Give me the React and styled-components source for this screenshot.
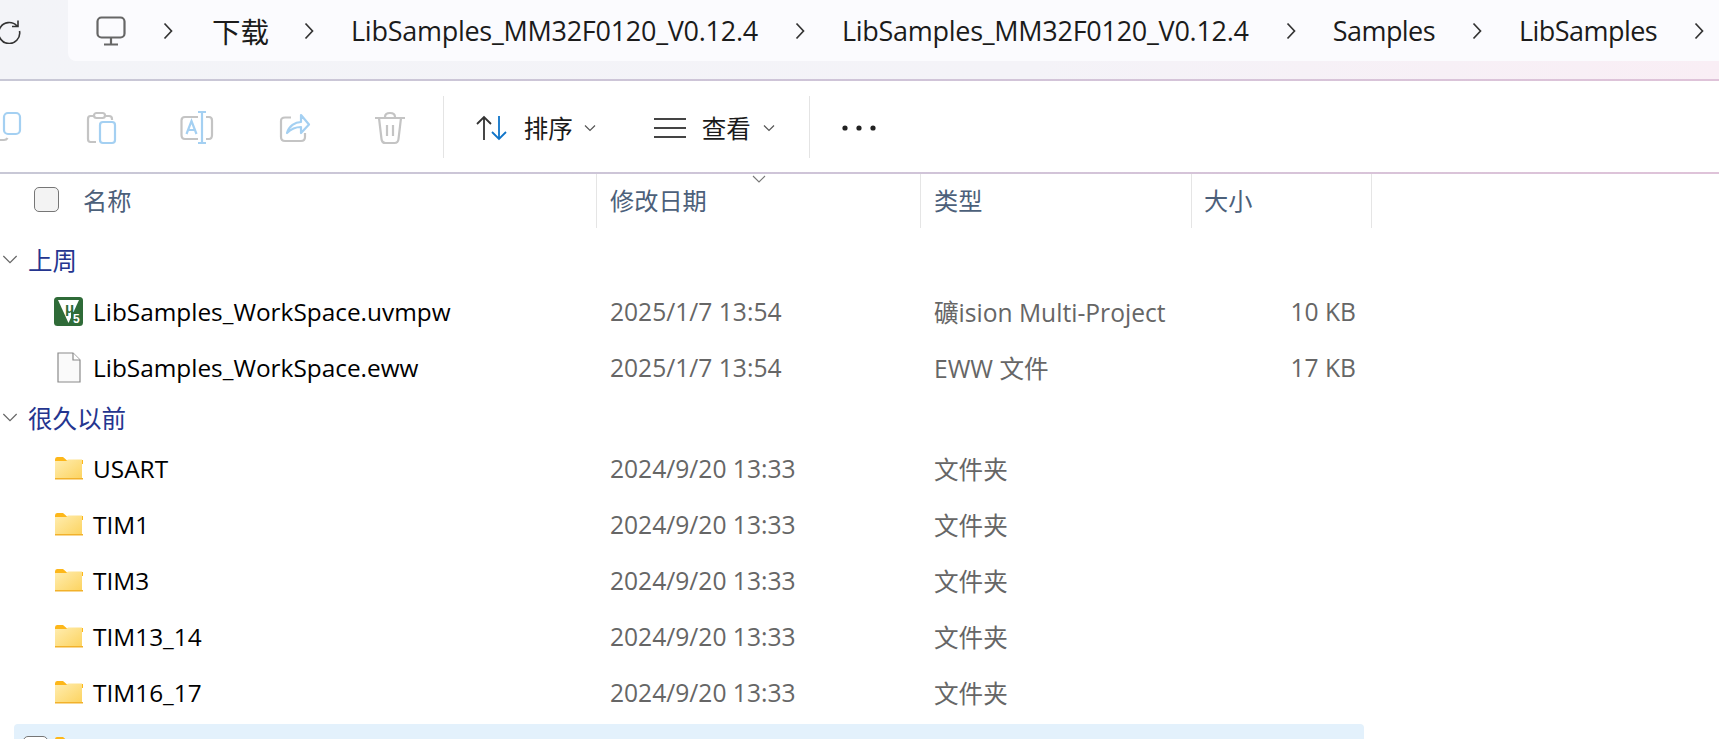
import React from "react";
import styled, { createGlobalStyle } from "styled-components";

const Global = createGlobalStyle`
  html, body { margin: 0; padding: 0; background: #fff; overflow: hidden; }
  body { font-family: "Open Sans", "Noto Sans CJK SC", sans-serif; }
  * { box-sizing: border-box; }
`;
const Page = styled.div`
  width: 1719px; height: 739px; overflow: hidden; background: #fff; position: relative;
`;
const TopBand = styled.div`
  height: 79px; display: flex; align-items: flex-start; padding-left: 68px;
  background: linear-gradient(90deg, #f3f4f8 0%, #f4f3f8 60%, #f9eef5 100%);
`;
const Crumbs = styled.nav`
  flex: 1; height: 61px; display: flex; align-items: center; gap: 37px; padding-left: 28px;
  border-radius: 0 0 0 8px; background: #fbfbfe; white-space: nowrap; color: #1b1b1b;
`;
const Crumb = styled.span`
  font-size: ${p => p.$cjk ? "28.500px" : "27px"};
  letter-spacing: ${p => p.$cjk ? "0" : p.$short ? "-0.55px" : "-0.27px"};
  margin: 0 ${p => p.$cjk ? -2 : 0}px 0 ${p => p.$cjk ? 2 : 0}px;
`;
const Refresh = styled.svg`
  position: absolute; left: -4px; top: 18px;
`;
const Rule = styled.div`
  height: 2px; background: linear-gradient(90deg, #c8c8d6 0%, #cfc4d8 50%, #dfc3d9 100%);
`;
const Toolbar = styled.div`
  height: 91px; padding-top: 3px; display: flex; align-items: center; margin-left: -44.700px;
`;
const ToolBtn = styled.div`
  width: 96.700px; flex: none; display: flex; justify-content: center; align-items: center;
`;
const Sep = styled.div`
  width: 1px; height: 62px; background: #e4e4e4; flex: none; margin: -2px 0 0 ${p => p.$ml || 0}px;
`;
const Menu = styled.div`
  display: flex; align-items: center; flex: none; width: ${p => p.$w}px;
  padding-left: ${p => p.$pl}px; color: #1b1b1b; font-size: 24.500px;
`;
const MenuLabel = styled.span`
  margin: 0 ${p => p.$mr}px 0 ${p => p.$ml}px; line-height: 1; font-family: "Noto Sans CJK SC", sans-serif;
`;
const Header = styled.div`
  height: 55px; display: grid; grid-template-columns: 597px 324px 271px 180px; position: relative;
`;
const HeadCell = styled.div`
  display: flex; align-items: center; height: 54px; padding: 0 0 4px ${p => p.$pl || 13}px;
  border-right: 1px solid #e5e5e5; color: #4c607a; font-size: 24.200px;
  font-family: "Noto Sans CJK SC", sans-serif;
`;
const Box = styled.span`
  width: 25px; height: 25px; border-radius: 5px; flex: none;
  border: 1.500px solid #767676; background: ${p => p.$white ? "#fff" : "#f3f3f3"};
`;
const HeadLabel = styled.span`
  margin-left: 24px;
`;
const SortMark = styled.svg`
  position: absolute; left: 752px; top: 1px;
`;
const List = styled.div`
  display: flex; flex-direction: column; width: 1364px; padding-left: 14px;
`;
const Group = styled.div`
  height: ${p => p.$h}px; margin-left: -14px; padding: ${p => p.$pt || 0}px 0 0 2px; display: flex; align-items: center;
  color: #24358f; font-size: 24.500px; font-family: "Noto Sans CJK SC", sans-serif;
`;
const GroupLabel = styled.span`
  margin-left: 10px;
`;
const Row = styled.div`
  display: grid; grid-template-columns: 583px 324px 271px 172px; align-items: center;
  height: 56px; flex: none;
`;
const SelectedRow = styled(Row)`
  height: 52px; margin-top: 4px; background: #e3f1fc; border-radius: 4px; position: relative;
  & svg { margin-top: -4px; }
`;
const NameCell = styled.div`
  display: flex; align-items: center; padding-left: 40px; color: #000; font-size: 24.400px;
`;
const IconSlot = styled.span`
  width: 29px; height: 30px; flex: none; display: flex; align-items: center; justify-content: center; margin-right: 10px;
`;
const Cell = styled.div`
  padding-left: ${p => p.$pl}px; padding-right: ${p => p.$pr || 0}px; color: #666; font-size: 24.600px;
  text-align: ${p => p.$right ? "right" : "left"}; white-space: nowrap;
`;
const RowCheck = styled(Box)`
  position: absolute; left: 9px; top: 12px; width: 25px; height: 25px; background: #fff;
`;

const Chevron = () => (
  <svg width="10" height="20" viewBox="0 0 10 20" fill="none" stroke="#333" strokeWidth="1.7"><path d="M1.500 2.500 8.500 10 1.500 17.500" /></svg>
);
const Down = ({ c = "#555", w = 12 }) => (
  <svg width={w} height={(w * 2) / 3} viewBox="0 0 12 8" fill="none" stroke={c} strokeWidth={12 / w * 1.2}><path d="M1 1.500 6 6.500 11 1.500" /></svg>
);
const BLUE = "#a4d0f2";
const GR = "#c4c4c4";
const CopyIcon = () => (
  <svg width="36" height="36" viewBox="0 0 36 36" fill="none" strokeWidth="2.200" overflow="visible">
    <rect x="18" y="3" width="16" height="21" rx="4" stroke={BLUE} />
    <path d="M9 30h9c2 0 3-1 3.500-2" stroke={GR} />
  </svg>
);
const PasteIcon = () => (
  <svg width="36" height="36" viewBox="0 0 36 36" fill="none" strokeWidth="2.200">
    <path d="M14 32H8.500Q6 32 6 29V9Q6 6 8.500 6H12M24 6h3q3 0 3 3v1" stroke={GR} />
    <rect x="12" y="3" width="11" height="5" rx="2.500" stroke={GR} />
    <rect x="18" y="12" width="15" height="21" rx="3" stroke={BLUE} />
  </svg>
);
const RenameIcon = () => (
  <svg width="36" height="36" viewBox="0 0 36 36" fill="none" strokeWidth="2.200">
    <path d="M19 7H6Q2.500 7 2.500 10.500V25Q2.500 29 6 29H19M27 7h3q3 0 3 3.500V25q0 4-3 4h-3" stroke={GR} />
    <path d="M23 2v31M19 2h8M19 33h8M7.500 24 12.500 11 17.500 24M9.500 20h6" stroke={BLUE} />
  </svg>
);
const ShareIcon = () => (
  <svg width="36" height="36" viewBox="0 0 36 36" fill="none" strokeWidth="2.200">
    <path d="M15 7.500H9Q5 7.500 5 11V27q0 4 4 4h16q4 0 4-4V23" stroke={GR} />
    <path d="M11 23c2-7 8-11 14-11V5L33 14.500 25 23V17c-5 0-10 2-14 6Z" stroke={BLUE} strokeLinejoin="round" />
  </svg>
);
const TrashIcon = () => (
  <svg width="36" height="36" viewBox="0 0 36 36" fill="none" stroke={GR} strokeWidth="2.200">
    <path d="M3 8h30M7 8l2.500 21q.4 4 4 4h9q3.600 0 4-4L29 8M13 7q0-4 5-4t5 4M15 15v11M21 15v11" />
  </svg>
);
const Folder = () => (
  <svg width="29" height="24" viewBox="0 0 29 24">
    <defs>
      <linearGradient id="fb" x1="0" y1="0" x2="1" y2="1">
        <stop offset="0" stopColor="#ffedb0" />
        <stop offset="1" stopColor="#fcd35f" />
      </linearGradient>
    </defs>
    <path d="M1 3.500Q1 1 3 1h6l3.500 3H29v4H1Z" fill="#fdb71a" />
    <path d="M1 5h11l2-1.500H28v19.500H1Z" fill="url(#fb)" />
    <rect x="1" y="22" width="28" height="1.500" fill="#f2b12b" />
  </svg>
);
const FileIcon = () => (
  <svg width="24" height="31" viewBox="0 0 24 31" fill="#fafafa" stroke="#8a8a8a" strokeWidth="1.200">
    <path d="M1 1H16L23 8V30H1Z" />
    <path d="M16 1V8H23" fill="#fff" />
  </svg>
);
const KeilIcon = () => (
  <svg width="29" height="29" viewBox="0 0 29 29">
    <rect width="29" height="29" rx="3.500" fill="#2f6b38" />
    <path d="M4 3H25L14.500 26Z" fill="#fff" />
    <text x="11" y="16" fontSize="15" fontWeight="700" fill="#2f6b38" fontFamily="Liberation Sans, sans-serif">μ</text>
    <rect x="17" y="15" width="11" height="13" fill="#2f6b38" />
    <text x="19" y="26" fontSize="12" fontWeight="700" fill="#fff" fontFamily="Liberation Sans, sans-serif">5</text>
  </svg>
);

const crumbs = ["LibSamples_MM32F0120_V0.12.4", "LibSamples_MM32F0120_V0.12.4", "Samples", "LibSamples"];
const folders = ["USART", "TIM1", "TIM3", "TIM13_14", "TIM16_17"];

const FileRow = ({ icon, name, date, type, size }) => (
  <Row>
    <NameCell><IconSlot>{icon}</IconSlot>{name}</NameCell>
    <Cell $pl={13}>{date}</Cell>
    <Cell $pl={13}>{type}</Cell>
    <Cell $pl={0} $pr={8} $right>{size}</Cell>
  </Row>
);

export default function App() {
  return (
    <Page>
      <Global />
      <TopBand>
        <Refresh width="26" height="26" viewBox="0 0 26 26" fill="none" stroke="#333" strokeWidth="1.600">
          <path d="M21 8A10.500 10.500 0 1 0 23.500 13M22 2.500V8.500H16" />
        </Refresh>
        <Crumbs>
          <svg width="30" height="30" viewBox="0 0 30 30" fill="none" stroke="#666" strokeWidth="2.200">
            <rect x="1.500" y="1.500" width="27" height="20" rx="4" />
            <path d="M15 22v6M8 28.500h14" />
          </svg>
          <Chevron />
          <Crumb $cjk>下载</Crumb>
          {crumbs.map((c, i) => (
            <React.Fragment key={i}>
              <Chevron />
              <Crumb $short={i > 1}>{c}</Crumb>
            </React.Fragment>
          ))}
          <Chevron />
        </Crumbs>
      </TopBand>
      <Rule />
      <Toolbar>
        <ToolBtn><CopyIcon /></ToolBtn>
        <ToolBtn><PasteIcon /></ToolBtn>
        <ToolBtn><RenameIcon /></ToolBtn>
        <ToolBtn><ShareIcon /></ToolBtn>
        <ToolBtn><TrashIcon /></ToolBtn>
        <Sep $ml={4} />
        <Menu $w={210} $pl={32}>
          <svg width="32" height="26" viewBox="0 0 32 26" fill="none" strokeWidth="1.800">
            <path d="M8 25V2M1 9l7-7 7 7" stroke="#333" />
            <path d="M23 1v23M16 17l7 7 7-7" stroke="#0f74c8" />
          </svg>
          <MenuLabel $ml={16} $mr={11}>排序</MenuLabel>
          <Down />
        </Menu>
        <Menu $w={155} $pl={0}>
          <svg width="32" height="22" viewBox="0 0 32 22" fill="none" stroke="#444" strokeWidth="2"><path d="M0 2h32M0 11h32M0 20h32" /></svg>
          <MenuLabel $ml={16} $mr={12}>查看</MenuLabel>
          <Down />
        </Menu>
        <Sep />
        <Menu $w={120} $pl={32}>
          <svg width="34" height="6" viewBox="0 0 34 6" fill="#222"><circle cx="3" cy="3" r="2.600" /><circle cx="17" cy="3" r="2.600" /><circle cx="31" cy="3" r="2.600" /></svg>
        </Menu>
      </Toolbar>
      <Rule />
      <Header>
        <HeadCell $pl={34}><Box /><HeadLabel>名称</HeadLabel></HeadCell>
        <HeadCell>修改日期</HeadCell>
        <HeadCell>类型</HeadCell>
        <HeadCell $pl={12}>大小</HeadCell>
        <SortMark width="14" height="8" viewBox="0 0 14 8" fill="none" stroke="#777" strokeWidth="1.100"><path d="M1 1 7 7 13 1" /></SortMark>
      </Header>
      <List>
        <Group $h={54} $pt={6}><Down c="#666" w={16} /><GroupLabel>上周</GroupLabel></Group>
        <FileRow icon={<KeilIcon />} name="LibSamples_WorkSpace.uvmpw" date="2025/1/7 13:54" type="礦ision Multi-Project" size="10 KB" />
        <FileRow icon={<FileIcon />} name="LibSamples_WorkSpace.eww" date="2025/1/7 13:54" type="EWW 文件" size="17 KB" />
        <Group $h={45}><Down c="#666" w={16} /><GroupLabel>很久以前</GroupLabel></Group>
        {folders.map(f => (
          <FileRow key={f} icon={<Folder />} name={f} date="2024/9/20 13:33" type="文件夹" size="" />
        ))}
        <SelectedRow>
          <RowCheck $white />
          <NameCell><IconSlot><Folder /></IconSlot></NameCell>
          <Cell $pl={13}>2024/9/20 13:33</Cell>
          <Cell $pl={13}>文件夹</Cell>
          <Cell $pl={0} />
        </SelectedRow>
      </List>
    </Page>
  );
}
